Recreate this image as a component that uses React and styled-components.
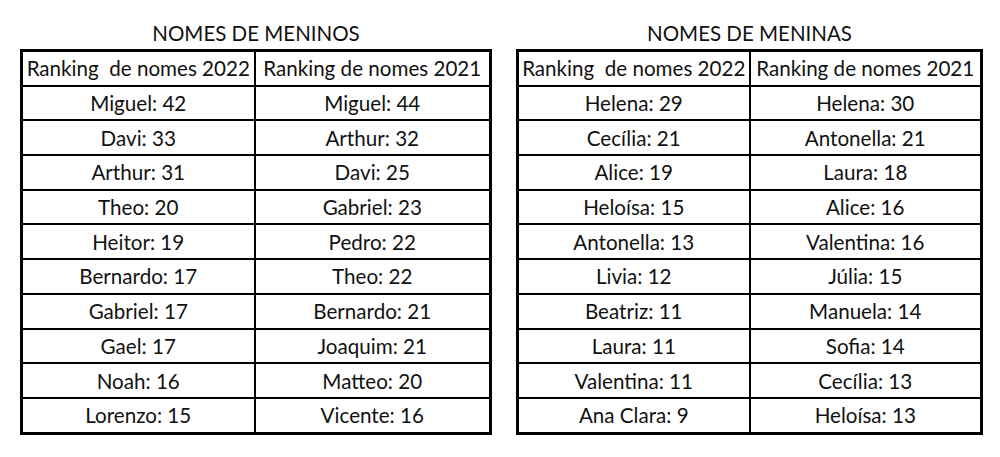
import React from "react";
import styled, { createGlobalStyle } from "styled-components";

const GlobalStyle = createGlobalStyle`
  body {
    margin: 0;
    background: #fff;
    font-family: Lato, "Liberation Sans", sans-serif;
    color: #111;
  }
`;

const Page = styled.div`
  display: flex;
  align-items: flex-start;
  gap: 24px;
  padding: 21px 0 0 20px;
  width: 1000px;
  height: 457px;
  box-sizing: border-box;
`;

const Block = styled.div`
  display: flex;
  flex-direction: column;
  width: ${(p) => p.$width}px;
`;

const Title = styled.h2`
  margin: 0 0 4px;
  font-size: 20.5px;
  font-weight: 400;
  line-height: 24px;
  text-align: center;
`;

const Table = styled.table`
  border-collapse: collapse;
  width: 100%;
  table-layout: fixed;
  border: 3px solid #000;
`;

const Cell = styled.td`
  border: 2.6px solid #000;
  height: 32.7px;
  padding: 0;
  font-size: 20.6px;
  line-height: 24px;
  text-align: center;
  white-space: pre;
`;

const HeadCell = styled(Cell).attrs({ as: "th" })`
  font-weight: 400;
`;

const boys = [
  ["Miguel: 42", "Miguel: 44"],
  ["Davi: 33", "Arthur: 32"],
  ["Arthur: 31", "Davi: 25"],
  ["Theo: 20", "Gabriel: 23"],
  ["Heitor: 19", "Pedro: 22"],
  ["Bernardo: 17", "Theo: 22"],
  ["Gabriel: 17", "Bernardo: 21"],
  ["Gael: 17", "Joaquim: 21"],
  ["Noah: 16", "Matteo: 20"],
  ["Lorenzo: 15", "Vicente: 16"],
];

const girls = [
  ["Helena: 29", "Helena: 30"],
  ["Cecília: 21", "Antonella: 21"],
  ["Alice: 19", "Laura: 18"],
  ["Heloísa: 15", "Alice: 16"],
  ["Antonella: 13", "Valentina: 16"],
  ["Livia: 12", "Júlia: 15"],
  ["Beatriz: 11", "Manuela: 14"],
  ["Laura: 11", "Sofia: 14"],
  ["Valentina: 11", "Cecília: 13"],
  ["Ana Clara: 9", "Heloísa: 13"],
];

function Ranking({ title, rows, width, split }) {
  return (
    <Block $width={width}>
      <Title>{title}</Title>
      <Table>
        <colgroup>
          <col style={{ width: split }} />
          <col />
        </colgroup>
        <thead>
          <tr>
            <HeadCell>Ranking  de nomes 2022</HeadCell>
            <HeadCell>Ranking de nomes 2021</HeadCell>
          </tr>
        </thead>
        <tbody>
          {rows.map((r, i) => (
            <tr key={i}>
              <Cell>{r[0]}</Cell>
              <Cell>{r[1]}</Cell>
            </tr>
          ))}
        </tbody>
      </Table>
    </Block>
  );
}

export default function App() {
  return (
    <>
      <GlobalStyle />
      <Page>
        <Ranking title="NOMES DE MENINOS" rows={boys} width={472} split={233} />
        <Ranking title="NOMES DE MENINAS" rows={girls} width={467} split={232} />
      </Page>
    </>
  );
}
